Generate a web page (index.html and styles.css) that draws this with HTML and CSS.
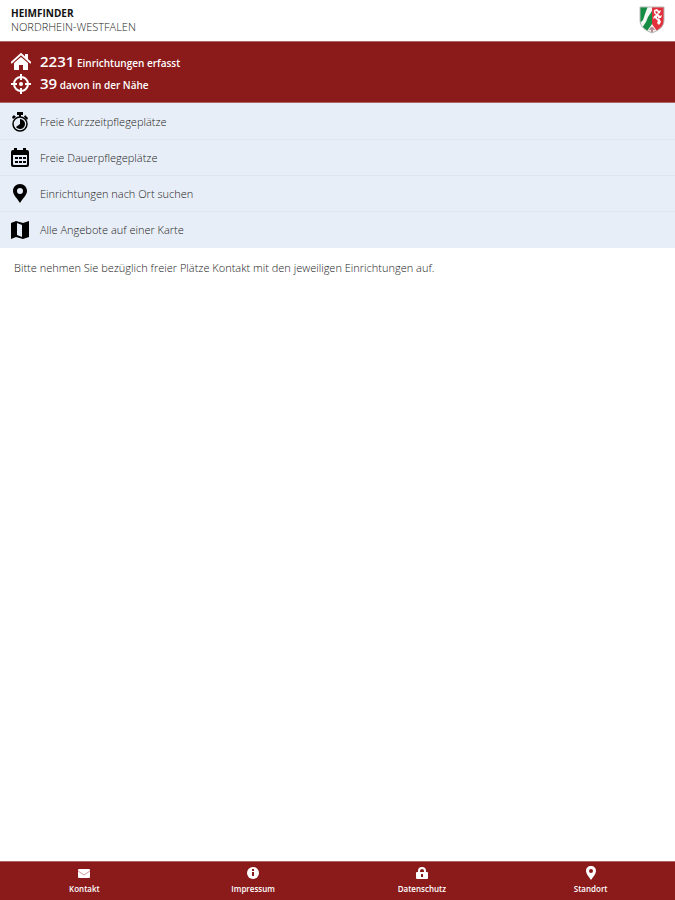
FILE: index.html
```html
<!DOCTYPE html>
<html lang="de">
<head>
    <meta charset="UTF-8">
    <meta name="viewport" content="width=device-width, initial-scale=1">
    <title>Heimfinder</title>
    <link rel="stylesheet" href="styles.css">
</head>
<body>
<header class="header">
    <div class="brand">
        <h1 class="brand_name">HEIMFINDER</h1>
        <div class="brand_region">NORDRHEIN-WESTFALEN</div>
    </div>
    <svg class="crest" viewBox="0 0 26 28" aria-hidden="true">
        <clipPath id="shield"><path d="M1 1H25V14C25 21 20 24 13 27C6 24 1 21 1 14Z"/></clipPath>
        <g clip-path="url(#shield)">
            <path fill="#168b43" d="M0 0H13V28H0Z"/>
            <path fill="#f5f7f5" d="M9 0H13V5L9 11L7 16L3 22L0 18L4 14L6 8Z"/>
            <path fill="#e3303d" d="M13 0H26V28H13Z"/>
            <path fill="#fff" d="M15 4L18 3L20 5L22 4L21 7L19 8L21 10L23 9L22 12L20 12L22 16L20 19L18 17L19 15L16 12L14 13L15 10L17 9L15 7Z"/>
            <path fill="#e3303d" d="M17 5L19 6L18 8L16 6ZM18 10L20 13L18 12Z"/>
            <path fill="#f4f0ee" d="M6 28L13 18L20 28Z"/>
            <path fill="#b98a90" d="M12 21H14L16 24H14V26H12V24H10Z"/>
        </g>
        <path fill="none" stroke="#b4bab6" d="M1 1H25V14C25 21 20 24 13 27C6 24 1 21 1 14Z"/>
    </svg>
</header>
<section class="stats">
    <div class="stat">
        <svg class="icon" viewBox="0 0 20 20" aria-hidden="true">
            <path fill="none" stroke="currentColor" stroke-width="2" d="M0 11L10 2L20 11"/>
            <path fill="currentColor" d="M14 2H17V8L14 5ZM3 11L10 5L17 11V18H12V13H8V18H3Z"/>
        </svg>
        <span><span class="number">2231</span> Einrichtungen erfasst</span>
    </div>
    <div class="stat">
        <svg class="icon" viewBox="0 0 20 20" aria-hidden="true">
            <circle cx="10" cy="10" r="7" fill="none" stroke="currentColor" stroke-width="2"/>
            <circle cx="10" cy="10" r="2" fill="currentColor"/>
            <path fill="none" stroke="currentColor" stroke-width="2" d="M10 0V6M10 14V20M0 10H6M14 10H20"/>
        </svg>
        <span><span class="number">39</span> davon in der Nähe</span>
    </div>
</section>
<nav class="menu">
    <a class="menu_item" href="#kurzzeit">
        <svg class="icon" viewBox="0 0 20 20" aria-hidden="true">
            <path fill="currentColor" d="M7 0H13V3H11V5H9V3H7ZM15 3L18 6L17 8L14 5ZM2 5L4 3L6 5L3 7Z"/>
            <circle cx="10" cy="12" r="7" fill="none" stroke="currentColor" stroke-width="1.500"/>
            <path fill="currentColor" d="M10 7A5 5 0 1 1 6 15L10 12Z"/>
        </svg>
        Freie Kurzzeitpflegeplätze
    </a>
    <a class="menu_item" href="#dauer">
        <svg class="icon" viewBox="0 0 20 20" aria-hidden="true">
            <path fill="currentColor" fill-rule="evenodd" d="M3 2H4V0H7V2H13V0H16V2H17Q19 2 19 4V17Q19 19 17 19H3Q1 19 1 17V4Q1 2 3 2ZM3 7V16Q3 17 4 17H16Q17 17 17 16V7Z"/>
            <path stroke="currentColor" stroke-width="2" stroke-dasharray="3 1" d="M5 10H16M5 14H16"/>
        </svg>
        Freie Dauerpflegeplätze
    </a>
    <a class="menu_item" href="#ort">
        <svg class="icon" viewBox="0 0 20 20" aria-hidden="true">
            <path fill="currentColor" fill-rule="evenodd" d="M10 0C6 0 3 3 3 7C3 11 7 14 10 19C13 14 17 11 17 7C17 3 14 0 10 0ZM10 4A3 3 0 1 1 10 10A3 3 0 1 1 10 4Z"/>
        </svg>
        Einrichtungen nach Ort suchen
    </a>
    <a class="menu_item" href="#karte">
        <svg class="icon" viewBox="0 0 20 20" aria-hidden="true">
            <path fill="currentColor" fill-rule="evenodd" d="M1 3L6 1L13 3L19 1V17L13 19L6 17L1 19ZM7 3V15L12 17V5Z"/>
        </svg>
        Alle Angebote auf einer Karte
    </a>
</nav>
<main class="content">
    <p class="note">Bitte nehmen Sie bezüglich freier Plätze Kontakt mit den jeweiligen Einrichtungen auf.</p>
</main>
<footer class="footer">
    <a class="tab" href="#kontakt">
        <svg class="tab_icon" viewBox="0 0 14 14" aria-hidden="true">
            <rect x="1" y="3" width="12" height="9" rx="1" fill="currentColor"/>
            <path fill="none" stroke="#d49b9b" d="M1 5L7 9L13 5"/>
        </svg>
        Kontakt
    </a>
    <a class="tab" href="#impressum">
        <svg class="tab_icon" viewBox="0 0 14 14" aria-hidden="true">
            <circle cx="7" cy="7" r="6" fill="currentColor"/>
            <path fill="#8b1a1a" d="M6 3H8V5H6ZM6 6H8V10H6Z"/>
        </svg>
        Impressum
    </a>
    <a class="tab" href="#datenschutz">
        <svg class="tab_icon" viewBox="0 0 14 14" aria-hidden="true">
            <rect x="1" y="6" width="12" height="7" rx="1" fill="currentColor"/>
            <path fill="none" stroke="currentColor" stroke-width="2" d="M4 7V5A3 3 0 0 1 10 5V7"/>
            <path fill="#8b1a1a" d="M6 8H8V11H6Z"/>
        </svg>
        Datenschutz
    </a>
    <a class="tab" href="#standort">
        <svg class="tab_icon" viewBox="0 0 14 14" aria-hidden="true">
            <path fill="currentColor" fill-rule="evenodd" d="M7 0C4 0 2 2 2 5C2 8 5 11 7 14C9 11 12 8 12 5C12 2 10 0 7 0ZM7 3A2 2 0 1 1 7 7A2 2 0 1 1 7 3Z"/>
        </svg>
        Standort
    </a>
</footer>
</body>
</html>
```
FILE: styles.css
```css
* {
    box-sizing: border-box;
}

body {
    display: flex;
    flex-direction: column;
    min-height: 100vh;
    margin: 0;
    font-family: "Open Sans", sans-serif;
    font-size: 11px;
    font-weight: 300;
    line-height: 14px;
    color: #222;
    background: white;
}

a {
    color: inherit;
    text-decoration: none;
}

.header {
    display: flex;
    align-items: center;
    justify-content: space-between;
    padding: 6px 10px 7px 11px;
}

.brand_name {
    margin: 0;
    font-size: 10px;
    font-weight: 700;
    line-height: 14px;
    color: #111;
}

.crest {
    width: 26px;
    height: 28px;
}

.stats {
    padding: 9px 11px 7px;
    color: white;
    background: #8b1a1a;
    border-top: 1px solid #ad6565;
    border-bottom: 1px solid #ad6565;
}

.stat {
    display: flex;
    align-items: center;
    gap: 9px;
    height: 22px;
    font-size: 10px;
    font-weight: 600;
    line-height: 22px;
}

.number {
    font-size: 15px;
}

.icon {
    flex: none;
    width: 20px;
    height: 20px;
}

.menu {
    padding-top: 1px;
    background: #e8eef7;
}

.menu_item {
    display: flex;
    align-items: center;
    gap: 10px;
    height: 36px;
    padding: 0 10px;
    border-bottom: 1px solid #dfe5ed;
}

.menu_item:last-child {
    border-bottom-color: transparent;
}

.menu_item .icon {
    color: black;
}

.content {
    flex: 1;
    padding: 13px 14px;
}

.note {
    margin: 0;
}

.footer {
    display: grid;
    grid-template-columns: repeat(4, 1fr);
    color: white;
    background: #8b1a1a;
    border-top: 1px solid #ad6565;
}

.tab {
    display: flex;
    flex-direction: column;
    align-items: center;
    gap: 2px;
    padding: 4px 0;
    font-size: 8px;
    font-weight: 600;
}

.tab_icon {
    width: 14px;
    height: 14px;
}
```
